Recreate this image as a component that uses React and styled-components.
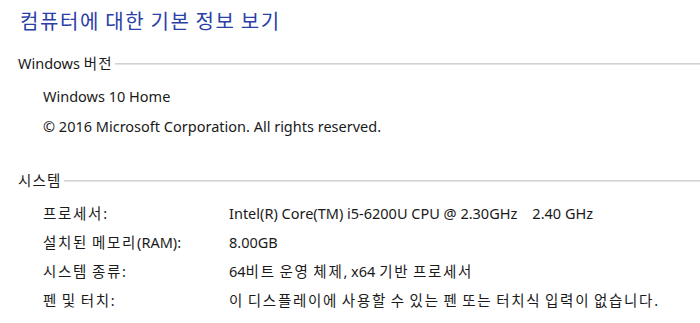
import React from 'react'
import styled, { createGlobalStyle } from 'styled-components'

const GlobalStyle = createGlobalStyle`
  html, body {
    margin: 0;
    padding: 0;
    background: #fff;
  }
  body {
    font-family: "Noto Sans", "Noto Sans CJK KR", sans-serif;
    color: #1a1a1a;
  }
`

const specs = [
  { label: '프로세서:', value: 'Intel(R) Core(TM) i5-6200U CPU @ 2.30GHz\u00a0\u00a0\u00a0 2.40 GHz' },
  { label: '설치된 메모리(RAM):', value: '8.00GB' },
  { label: '시스템 종류:', value: '64비트 운영 체제, x64 기반 프로세서' },
  { label: '펜 및 터치:', value: '이 디스플레이에 사용할 수 있는 펜 또는 터치식 입력이 없습니다.' },
]

// hangul runs get a little extra tracking so they sit as wide as the original
function Ko({ children, spacing }) {
  return String(children)
    .split(/([\uAC00-\uD7A3]+)/)
    .map((part, i) =>
      /[\uAC00-\uD7A3]/.test(part)
        ? <Hangul key={i} $spacing={spacing}>{part}</Hangul>
        : part
    )
}

function App() {
  return (
    <>
      <GlobalStyle />
      <Page>
        <Title><Ko spacing="1.6px">컴퓨터에 대한 기본 정보 보기</Ko></Title>

        <Section>
          <SectionHead>
            <span><Ko spacing="1.2px">Windows 버전</Ko></span>
            <Rule />
          </SectionHead>
          <Body>
            <Line>Windows 10 Home</Line>
            <Line>© 2016 Microsoft Corporation. All rights reserved.</Line>
          </Body>
        </Section>

        <Section>
          <SectionHead>
            <span><Ko spacing="1.2px">시스템</Ko></span>
            <Rule />
          </SectionHead>
          <Grid>
            {specs.map(s => (
              <React.Fragment key={s.label}>
                <Cell><Ko>{s.label}</Ko></Cell>
                <Cell><Ko>{s.value}</Ko></Cell>
              </React.Fragment>
            ))}
          </Grid>
        </Section>
      </Page>
    </>
  )
}

export default App

let Page = styled.div`
  width: 700px;
  height: 323px;
  overflow: hidden;
  padding: 8px 0 0 18px;
  box-sizing: border-box;
`
let Hangul = styled.span`
  letter-spacing: ${p => p.$spacing || '1.7px'};
`
let Title = styled.h1`
  margin: 0 0 0 2px;
  font-size: 20px;
  font-weight: 400;
  color: #2a40a6;
  line-height: 28px;
`
let Section = styled.section`
  margin-top: 15px;
  & + & {
    margin-top: 27px;
  }
`
let SectionHead = styled.div`
  display: flex;
  align-items: center;
  font-size: 14.5px;
  line-height: 24px;
  span {
    white-space: nowrap;
  }
`
let Rule = styled.div`
  flex: 1;
  height: 1px;
  background: #d2d2d2;
  border-bottom: 1px solid #e4e4e4;
  margin-left: 2px;
  margin-top: 2px;
`
let Body = styled.div`
  padding-left: 25px;
  margin-top: 6px;
`
let Line = styled.div`
  font-size: 14.5px;
  line-height: 30px;
`
let Grid = styled.div`
  display: grid;
  grid-template-columns: 186px 1fr;
  padding-left: 25px;
  margin-top: 7px;
  font-size: 14.5px;
  line-height: 29px;
`
let Cell = styled.div`
  white-space: nowrap;
`
